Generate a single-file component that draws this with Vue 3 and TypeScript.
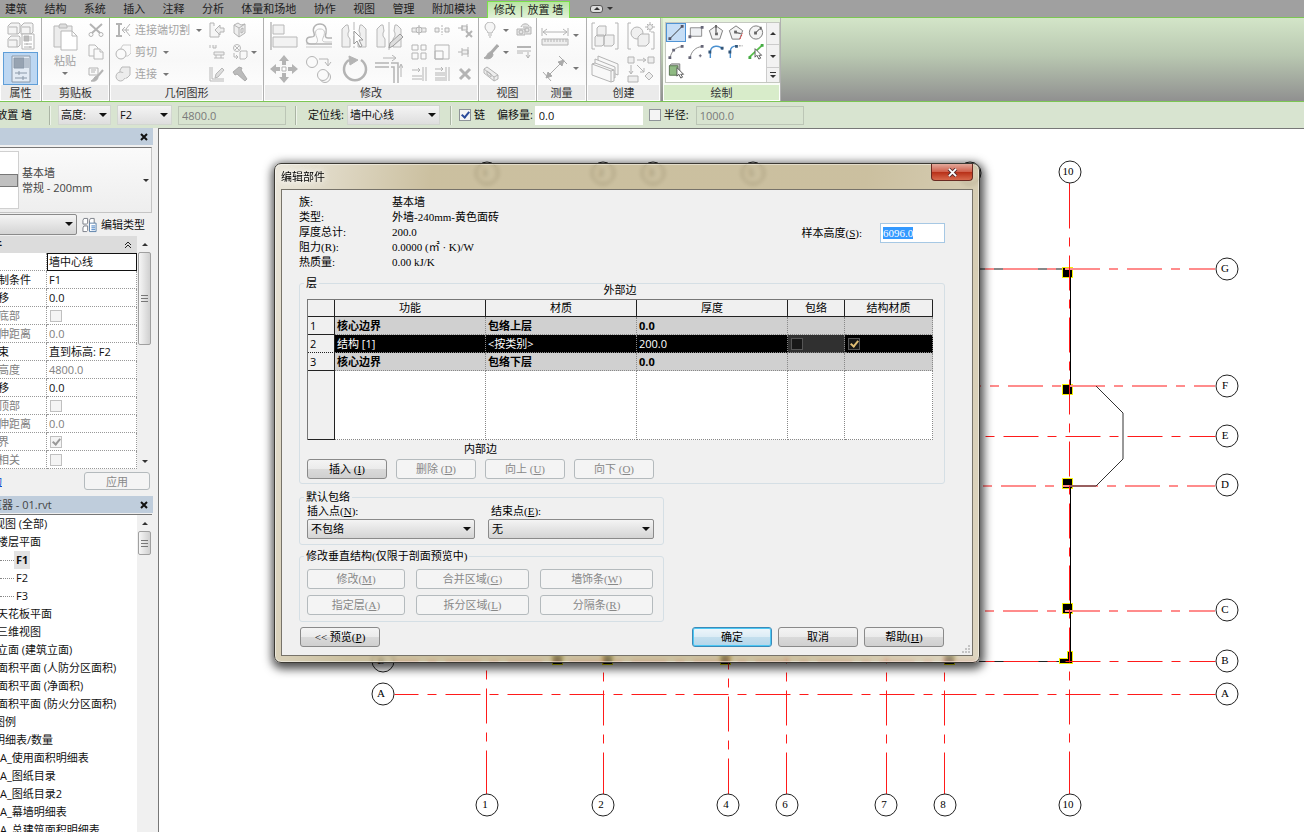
<script setup lang="ts">
import { onMounted, ref } from 'vue'

interface PropertyRow {
  label: string
  kind: 'text' | 'check'
  value?: string
  checked?: boolean
  muted?: boolean
  active?: boolean
}
interface TreeRow {
  text: string
  level: 'root' | 'group' | 'sheet' | 'leaf'
  current?: boolean
}
interface GridLine {
  x1: number
  y1: number
  x2: number
  y2: number
  offset: number
  soft?: boolean
}

const tabs = ['建筑', '结构', '系统', '插入', '注释', '分析', '体量和场地', '协作', '视图', '管理', '附加模块']

const joinTools = [
  { icon: 'cope', text: '连接端切割' },
  { icon: 'cutgeo', text: '剪切' },
  { icon: 'joingeo', text: '连接' },
]
const geoTools = ['wallopen', 'face', 'beamjoin', 'split-face', 'paint', 'hammer']
const modifyLarge = ['align', 'offset', 'mirror-pick', 'mirror-draw', 'move', 'copy-el', 'rotate', 'trim']
const modifySmall = ['split', 'split-gap', 'unpin', 'array', 'scale', 'pin', 'extend', 'extend-many', 'delete']
const drawTools = [
  'line', 'rect', 'poly-in', 'poly-out', 'circle',
  'arc3', 'arc-center', 'arc-tan', 'fillet', 'pick-line', 'pick-face',
]

const properties: PropertyRow[] = [
  { label: '定位线', kind: 'text', value: '墙中心线', active: true },
  { label: '底部限制条件', kind: 'text', value: 'F1' },
  { label: '底部偏移', kind: 'text', value: '0.0' },
  { label: '已附着底部', kind: 'check', muted: true },
  { label: '底部延伸距离', kind: 'text', value: '0.0', muted: true },
  { label: '顶部约束', kind: 'text', value: '直到标高: F2' },
  { label: '无连接高度', kind: 'text', value: '4800.0', muted: true },
  { label: '顶部偏移', kind: 'text', value: '0.0' },
  { label: '已附着顶部', kind: 'check', muted: true },
  { label: '顶部延伸距离', kind: 'text', value: '0.0', muted: true },
  { label: '房间边界', kind: 'check', checked: true, muted: true },
  { label: '与体量相关', kind: 'check', muted: true },
]

const tree: TreeRow[] = [
  { text: '视图 (全部)', level: 'root' },
  { text: '楼层平面', level: 'group' },
  { text: 'F1', level: 'leaf', current: true },
  { text: 'F2', level: 'leaf' },
  { text: 'F3', level: 'leaf' },
  { text: '天花板平面', level: 'group' },
  { text: '三维视图', level: 'group' },
  { text: '立面 (建筑立面)', level: 'group' },
  { text: '面积平面 (人防分区面积)', level: 'group' },
  { text: '面积平面 (净面积)', level: 'group' },
  { text: '面积平面 (防火分区面积)', level: 'group' },
  { text: '图例', level: 'root' },
  { text: '明细表/数量', level: 'root' },
  { text: 'A_使用面积明细表', level: 'sheet' },
  { text: 'A_图纸目录', level: 'sheet' },
  { text: 'A_图纸目录2', level: 'sheet' },
  { text: 'A_幕墙明细表', level: 'sheet' },
  { text: 'A_总建筑面积明细表', level: 'sheet' },
]

const gridLines: GridLine[] = [
  { x1: 979, y1: 269, x2: 1215, y2: 269, offset: 38, soft: true },
  { x1: 979, y1: 386, x2: 1215, y2: 386, offset: 33, soft: true },
  { x1: 979, y1: 436, x2: 1215, y2: 436, offset: 38 },
  { x1: 979, y1: 486, x2: 1215, y2: 486, offset: 40, soft: true },
  { x1: 979, y1: 611, x2: 1215, y2: 611, offset: 38, soft: true },
  { x1: 394, y1: 661, x2: 1215, y2: 661, offset: 11 },
  { x1: 394, y1: 694, x2: 1215, y2: 694, offset: 11 },
  { x1: 1069, y1: 194, x2: 1069, y2: 794, offset: 1 },
  { x1: 486, y1: 670, x2: 486, y2: 794, offset: 44 },
  { x1: 603, y1: 656, x2: 603, y2: 794, offset: 28 },
  { x1: 728, y1: 656, x2: 728, y2: 794, offset: 22 },
  { x1: 786, y1: 656, x2: 786, y2: 794, offset: 28 },
  { x1: 886, y1: 656, x2: 886, y2: 794, offset: 28 },
  { x1: 944, y1: 656, x2: 944, y2: 794, offset: 28 },
]
const lineEnds = [486, 603, 728, 786, 886, 944, 1069]

const bubbles = [
  { x: 487, y: 173, t: '1' }, { x: 603, y: 173, t: '2' }, { x: 653, y: 173, t: '3' },
  { x: 753, y: 173, t: '5' }, { x: 970, y: 173, t: '9' }, { x: 1070, y: 172, t: '10' },
  { x: 1227, y: 269, t: 'G' }, { x: 1227, y: 386, t: 'F' }, { x: 1227, y: 436, t: 'E' },
  { x: 1227, y: 485, t: 'D' }, { x: 1227, y: 610, t: 'C' }, { x: 1227, y: 661, t: 'B' },
  { x: 1227, y: 694, t: 'A' }, { x: 383, y: 661, t: 'B' }, { x: 383, y: 694, t: 'A' },
  { x: 487, y: 805, t: '1' }, { x: 603, y: 805, t: '2' }, { x: 728, y: 805, t: '4' },
  { x: 787, y: 805, t: '6' }, { x: 886, y: 805, t: '7' }, { x: 945, y: 805, t: '8' },
  { x: 1070, y: 805, t: '10' },
]
const columns = [
  { x: 1062, y: 267 }, { x: 1062, y: 384 }, { x: 1062, y: 478 }, { x: 1062, y: 603 },
  { x: 552, y: 654 }, { x: 602, y: 654 }, { x: 720, y: 654 }, { x: 944, y: 654 },
]

const info = [
  ['族:', '基本墙'],
  ['类型:', '外墙-240mm-黄色面砖'],
  ['厚度总计:', '200.0'],
  ['阻力(R):', '0.0000 (㎡ · K)/W'],
  ['热质量:', '0.00 kJ/K'],
]
const layers = [
  { n: 1, fn: '核心边界', mat: '包络上层', th: '0.0', core: true },
  { n: 2, fn: '结构 [1]', mat: '<按类别>', th: '200.0', core: false },
  { n: 3, fn: '核心边界', mat: '包络下层', th: '0.0', core: true },
]
const rowButtons = [
  { t: '插入', k: 'I', off: false }, { t: '删除', k: 'D', off: true },
  { t: '向上', k: 'U', off: true }, { t: '向下', k: 'O', off: true },
]
const verticalButtons = [
  { t: '修改', k: 'M' }, { t: '合并区域', k: 'G' }, { t: '墙饰条', k: 'W' },
  { t: '指定层', k: 'A' }, { t: '拆分区域', k: 'L' }, { t: '分隔条', k: 'R' },
]

const sampleHeight = ref('6096.0')
const sampleInput = ref<HTMLInputElement | null>(null)
onMounted(() => {
  sampleInput.value?.focus()
  sampleInput.value?.select()
})
</script>

<template>
  <div class="app">
    <svg class="sprite" aria-hidden="true">
      <defs>
        <g id="i-types" fill="#f4f4f4" stroke="#b4b4b4">
          <path d="M1 4l3-3h8l1 1v8l-2 2H1zM14 4l3-3h8l1 1v8l-2 2H14zM1 17l3-3h8l1 1v8l-2 2H1z" />
          <path d="M2 5h8v7M15 5h8v7M2 18h8v7" fill="none" />
          <path d="M15 12h12v15H15z" fill="#fff" />
          <path d="M17 14h5v5h-5z" fill="#bbb" /><path d="M24 14v5M17 22h8M17 25h8M20 21v2M23 24v2" />
        </g>
        <g id="i-props" stroke="#8a98a8">
          <path d="M5 1h18v26H5z" fill="#e3ebf4" /><path d="M7 3h10v10H7z" fill="#97a3b1" />
          <path d="M19 3v10M21 3v10M8 18h12M8 23h12M12 16v4M16 21v4" />
        </g>
        <g id="i-paste" fill="#ececec" stroke="#b8b8b8">
          <path d="M3 3h18v21H3z" /><path d="M8 3l1-2h6l1 2v2H8z" fill="#ddd" />
          <path d="M10 8h11l5 5v14H10z" fill="#fff" /><path d="M21 8v5h5" fill="none" />
        </g>
        <g id="i-cut" stroke="#b4b4b4" fill="none"><path d="M2 2l10 9M14 2L4 11" stroke-width="2" /><circle cx="3" cy="12.500" r="2" /><circle cx="13" cy="12.500" r="2" /></g>
        <g id="i-copy" stroke="#b8b8b8" fill="#fafafa"><path d="M1 1h6l3 3v8H1z" /><path d="M6 5h6l3 3v7H6z" /><path d="M12 5v3h3" /></g>
        <g id="i-match" stroke="#b4b4b4" fill="none"><path d="M1 2h9v7H1zM3 4h5M3 6h4" /><path d="M15 4l-6 7" stroke-width="2" /><path d="M9 10c-3 0-3 4-6 5 4 1 7-1 7-4z" fill="#b4b4b4" /></g>
        <g id="i-cope" stroke="#b4b4b4" fill="none"><path d="M1 2h6M1 14h6M4 2v12" stroke-width="2" /><path d="M15 2l-4 5v2l4 5M14 8H7M10 5L7 8l3 3" /></g>
        <g id="i-cutgeo" stroke="#b4b4b4" fill="#fafafa"><path d="M6 4l2-3h8v8l-3 3H6z" fill="none" stroke="#ccc" /><circle cx="6" cy="10" r="5" /></g>
        <g id="i-joingeo" stroke="#b8b8b8" fill="#ececec"><path d="M5 4l2-3h8v8l-3 3H5z" /><circle cx="5.500" cy="10.500" r="4.500" /><path d="M6 7h5v5H7z" stroke="none" /></g>
        <g id="i-wallopen" stroke="#b4b4b4" fill="#eee"><path d="M5 4V1h-4v14h9v-3" fill="#f6f6f6" /><path d="M15 6h-4V3L6 8l5 5v-3h4z" /></g>
        <g id="i-face" stroke="#b4b4b4" fill="#eee"><path d="M2 3l4-2 3 2 4-1v9l-6 4-5-4zM2 3l5 3v9M7 6l6-4M9 7l2-1v4l-2 1z" /></g>
        <g id="i-beamjoin" stroke="#b8b8b8" fill="#eee"><path d="M1 1v3M4 1v3h3V1M5 8h10v3H5zM7 11v3M12 11v3M5 14h10" /></g>
        <g id="i-split-face" stroke="#b8b8b8" fill="none"><circle cx="5" cy="4" r="3.500" /><path d="M3 2l4 4M7 2L3 6M9 7h6v6l-2 2H8V8zM2 9v4h4M4 11l2 2-2 2" /></g>
        <g id="i-paint" stroke="#b8b8b8" fill="#ddd"><path d="M1 1v14h14M3 1v12h12" fill="none" /><path d="M6 12l1-4 6-6 2 2-6 7z" /></g>
        <g id="i-hammer" stroke="#aaa" fill="#bbb"><path d="M1 6l6-5 3 1-1 2 6 9-2 2-8-7-2 1z" /></g>
        <g id="i-align" stroke="#b8b8b8" fill="#f2f2f2"><path d="M1 0v28" stroke="#999" /><path d="M3 3h11v9H3zM3 15h24v10H3z" /></g>
        <g id="i-offset" stroke="#b4b4b4" fill="none"><path d="M1 25h26M1 22h7c5 0 5-4 4-6-3-7-1-9 3-9s6 2 3 9c-1 2-1 4 3 4h6" stroke="#c8c8c8" /><path d="M27 16h-4c-3 0-3-2-2-5 1-5-1-9-6-9s-8 4-6 9c1 3 0 4-3 4-6 0-6 7 0 7h21" stroke-width="1.500" /></g>
        <g id="i-mirror-pick" stroke="#b8b8b8" fill="#f0f0f0"><path d="M2 25V7l4-4h2l1 6-1 2v3l2 3v8zM26 25V7l-4-4h-2l-1 6 1 2v3l-2 3v8z" /><path d="M14 0v28" stroke-dasharray="8 2 2 2" /><path d="M14 9v13l3-3 3 6 2-1-3-6h4z" fill="#fff" stroke="#999" /></g>
        <g id="i-mirror-draw" stroke="#b8b8b8" fill="#f0f0f0"><path d="M2 25V7l4-4h2l1 6-1 2v3l2 3v8zM26 25V7l-4-4h-2l-1 6 1 2v3l-2 3v8z" /><path d="M14 0v28" /><path d="M14 26l1-5 10-9 3 3-10 9z" fill="#ddd" stroke="#999" /></g>
        <g id="i-move" fill="#b4b4b4"><path d="M14 0l5 6h-3v4h-4V6H9zM14 28l5-6h-3v-4h-4v4H9zM0 14l6-5v3h4v4H6v3zM28 14l-6-5v3h-4v4h4v3z" /><path d="M12 12h4v4h-4z" fill="#fff" stroke="#b4b4b4" /></g>
        <g id="i-copy-el" stroke="#b4b4b4" fill="#fafafa"><circle cx="7" cy="7" r="5.500" /><circle cx="20" cy="22" r="5.500" /><circle cx="18" cy="20" r="5.500" /><path d="M14 4h9v6M20 7l3 4 3-4" fill="none" /></g>
        <g id="i-rotate" stroke="#b4b4b4" fill="none"><path d="M9 5a11 11 0 1 0 12 0" stroke-width="2.500" /><path d="M9 1l9 4-8 5z" fill="#b4b4b4" /></g>
        <g id="i-trim" stroke="#b4b4b4" fill="none"><path d="M0 8h14M0 12h14M16 8h7v20M16 12h3v16" stroke-width="1.500" /><path d="M8 3h12M17 0l4 3-4 3M26 22V10M24 13l2-4 2 4" /></g>
        <g id="i-split" stroke="#b4b4b4" fill="#eee"><path d="M1 6h14v4H1z" /><circle cx="8" cy="8" r="3" /><path d="M8 3v10" /></g>
        <g id="i-split-gap" stroke="#b4b4b4" fill="#eee"><path d="M1 6h4v4H1zM11 6h4v4h-4z" /><path d="M8 3v10" stroke-dasharray="2 1" /></g>
        <g id="i-unpin" stroke="#b4b4b4" fill="#eee"><path d="M1 6h4M5 3v6M5 4h5v4H5zM10 2v8" /><path d="M9 9l6 6M15 9l-6 6" stroke-width="2" /></g>
        <g id="i-array" stroke="#b4b4b4" fill="#fafafa"><path d="M1 1h6v5H1zM10 1h5v5h-5zM1 9h6v6H1zM10 9h5v6h-5z" /></g>
        <g id="i-scale" stroke="#b4b4b4" fill="#fafafa"><path d="M1 1h14v14H1zM1 7h8v8H1z" /></g>
        <g id="i-pin" stroke="#b4b4b4" fill="#eee"><path d="M1 8h4M5 4v8M5 6h6v4H5M11 3v10" /></g>
        <g id="i-extend" stroke="#b4b4b4" fill="none"><path d="M1 4h8M7 2l2 2-2 2M12 1v14M15 1v14M1 10h10M1 13h10" /></g>
        <g id="i-extend-many" stroke="#b4b4b4" fill="none"><path d="M1 3h8M7 1l2 2-2 2M12 1v14M15 1v14M1 7h10M1 9h10M1 12h10M1 14h10" /></g>
        <g id="i-delete" stroke="#b4b4b4"><path d="M3 3l10 10M13 3L3 13" stroke-width="3" /></g>
        <g id="i-bulb" stroke="#b4b4b4" fill="#f6f6f6"><path d="M5 11c0-2-3-3-3-6a4.500 4.500 0 0 1 10 0c0 3-3 4-3 6zM5 13h4M6 15h2" /></g>
        <g id="i-override" stroke="#b4b4b4" fill="#e6e6e6"><path d="M1 7h8v6H1zM7 5h8v7h-5M5 5c1-4 7-4 8-1" /><circle cx="5" cy="10" r="2" /><circle cx="11" cy="8" r="2" /></g>
        <g id="i-brush" stroke="#aaa"><path d="M15 1L8 9" stroke-width="3" /><path d="M8 8c-4 0-3 4-7 6 5 2 9 0 9-4z" fill="#aaa" /></g>
        <g id="i-lines" stroke="#b4b4b4" fill="none"><path d="M1 3h14" stroke-width="2" /><path d="M1 7h14M1 9h6M12 8v6M10 11l2 3 2-3" /></g>
        <g id="i-box" stroke="#b4b4b4" fill="#eee"><path d="M1 3l3-2 11 8v4l-4 2L1 7zM1 3l10 8v4M11 11l4-2M4 5l4 3v3L4 8z" /></g>
        <g id="i-measure" stroke="#b4b4b4" fill="#eee"><path d="M2 10h24M6 7l-4 3 4 3M22 7l4 3-4 3M1 6v8M27 6v8" fill="none" /><path d="M1 17h26v6H1z" /><path d="M4 17v3M7 17v3M10 17v3M13 17v3M16 17v3M19 17v3M22 17v3M25 17v3" /></g>
        <g id="i-dimension" stroke="#aaa" fill="#aaa"><path d="M6 22L22 6M2 17l8 9M18 1l8 8" /><path d="M5 23l2-6 4 4zM23 5l-2 6-4-4z" /></g>
        <g id="i-assembly" stroke="#b4b4b4" fill="#f0f0f0"><path d="M4 1H1v26h3M24 1h3v26h-3" fill="none" /><path d="M6 6l2-2h7v8l-2 2H6zM4 15l2-2h7v9l-2 2H4zM13 15l2-2h8v9l-2 2h-8z" /></g>
        <g id="i-group" stroke="#b4b4b4" fill="#f0f0f0"><path d="M4 1H1v26h3M24 10h3v17h-3" fill="none" /><circle cx="10" cy="11" r="6" /><path d="M11 15l3-3h8v9l-3 3h-8z" /><circle cx="23" cy="5" r="2.500" /><path d="M23 0v2M23 8v2M18 5h2M26 5h2M20 2l1 1M26 2l-1 1M20 8l1-1" /></g>
        <g id="i-parts" stroke="#b4b4b4" fill="#f8f8f8"><path d="M7 1l20 8v11L7 12z" /><path d="M4 4l20 8v11L4 15z" /><path d="M1 9l3-1 19 7v11l-3 1L1 20z" /><path d="M1 9l19 7 3-1M20 16v11" fill="none" /></g>
        <g id="i-similar" stroke="#b4b4b4" fill="#eee"><path d="M1 2h6v6H1zM21 2h6v6h-6zM1 21h10v6H1zM22 17l4 4-4 4-4-4z" /><path d="M10 5h8M16 3l3 2-3 2M4 10v8M2 16l2 3 2-3M10 10l7 7M17 13v4h-4" fill="none" /></g>
        <g id="i-line"><path d="M3 15L15 3" stroke="#333" /><path d="M1 14h3v3H1zM14 1h3v3h-3z" fill="#556" /></g>
        <g id="i-rect"><path d="M3 4h12v9H3z" fill="#eef0f3" stroke="#888" /><path d="M1 12h3v3H1zM14 2h3v3h-3z" fill="#667" /></g>
        <g id="i-poly-in"><path d="M9 2l7 5-3 9H5L2 7z" fill="#f4f4f4" stroke="#777" /><path d="M9 3v6" stroke="#333" /><path d="M8 9h3v3H8zM8 1h2v3H8z" fill="#666" /></g>
        <g id="i-poly-out"><path d="M9 2l7 5-3 9H5L2 7z" fill="#f4f4f4" stroke="#777" /><path d="M8 9l6 1" stroke="#333" /><path d="M7 7h3v3H7z" fill="#666" /><path d="M13 16l3-6" stroke="#e33" stroke-dasharray="2 1" /></g>
        <g id="i-circle"><circle cx="9" cy="9" r="7" fill="#f4f4f4" stroke="#777" /><path d="M9 9l4-4" stroke="#333" /><path d="M7 8h3v3H7zM13 3h2v3h-2z" fill="#666" /></g>
        <g id="i-arc3"><path d="M3 15C4 9 9 4 15 4" fill="none" stroke="#888" /><path d="M1 14h3v3H1zM14 2h3v3h-3zM5 6h3v3H5z" fill="#667" /></g>
        <g id="i-arc-center"><path d="M3 15C4 9 9 4 15 4" fill="none" stroke="#888" /><path d="M1 14h3v3H1zM14 2h3v3h-3zM12 13h3v1h-3zM13 12h1v3h-1z" fill="#667" /></g>
        <g id="i-arc-tan"><path d="M3 16V9c1-7 10-7 13-2" fill="none" stroke="#4a90d0" stroke-width="1.500" /><path d="M1 8h3v3H1zM14 4h3v3h-3z" fill="#357" /></g>
        <g id="i-fillet"><path d="M3 16V9c0-4 3-6 7-6" fill="none" stroke="#4a90d0" stroke-width="1.500" /><path d="M1 8h3v3H1zM8 2h3v3H8z" fill="#357" /><path d="M12 3h4" stroke="#888" stroke-dasharray="2 1" /></g>
        <g id="i-pick-line"><path d="M2 15L16 2" stroke="#59c04c" stroke-width="2" /><path d="M1 14h3v3H1zM14 1h3v3h-3z" fill="#4a4" /><path d="M8 6v9l2-2 2 4 2-1-2-3h3z" fill="#fff" stroke="#555" /></g>
        <g id="i-pick-face"><path d="M2 4l2-2h9v10l-2 2" fill="#ccc" stroke="#777" /><path d="M2 4h9v10H2z" fill="#8fba83" stroke="#55734e" /><path d="M10 6v9l2-2 2 4 2-1-2-3h3z" fill="#fff" stroke="#555" /></g>
        <g id="i-edit-type" fill="#fff" stroke="#777c85"><path d="M1 3l1-2h4v5l-1 1H1zM8 3l1-2h4v5l-1 1H8zM1 11l1-2h4v5l-1 1H1z" /><path d="M8 6h7v9H8z" stroke="#5a7fa8" /><path d="M10 9h4M10 11h4M10 13h4" stroke="#3b78c0" /></g>
      </defs>
    </svg>

    <nav class="tabs" aria-label="功能区选项卡">
      <div class="tab-list">
        <button v-for="t in tabs" :key="t" type="button" class="tab">{{ t }}</button>
      </div>
      <button type="button" class="tab current">修改 | 放置 墙</button>
      <button type="button" class="ribbon-toggle" aria-label="最小化功能区">
        <span class="pill"><i class="tri up"></i></span><i class="tri"></i>
      </button>
    </nav>

    <header class="ribbon">
      <section class="panel p-props">
        <div class="tools stack">
          <button type="button" class="big" aria-label="类型属性"><svg viewBox="0 0 28 28"><use href="#i-types" /></svg></button>
          <button type="button" class="big pressed" aria-label="属性"><svg viewBox="0 0 28 28"><use href="#i-props" /></svg></button>
        </div>
        <h2>属性</h2>
      </section>
      <section class="panel p-clip">
        <div class="tools">
          <button type="button" class="paste">
            <svg viewBox="0 0 28 28"><use href="#i-paste" /></svg><span>粘贴</span><i class="tri dim"></i>
          </button>
          <div class="small-col">
            <button v-for="i in ['cut', 'copy', 'match']" :key="i" type="button" class="small" :aria-label="i"><svg viewBox="0 0 16 16"><use :href="'#i-' + i" /></svg></button>
          </div>
        </div>
        <h2>剪贴板</h2>
      </section>
      <section class="panel p-geo">
        <div class="tools">
          <div class="join-col">
            <button v-for="j in joinTools" :key="j.icon" type="button" class="wide">
              <svg viewBox="0 0 16 16"><use :href="'#i-' + j.icon" /></svg><span>{{ j.text }}</span><i class="tri dim"></i>
            </button>
          </div>
          <div class="small-grid two">
            <button v-for="i in geoTools" :key="i" type="button" class="small" :aria-label="i"><svg viewBox="0 0 16 16"><use :href="'#i-' + i" /></svg></button>
          </div>
          <i class="tri dim middle"></i>
        </div>
        <h2>几何图形</h2>
      </section>
      <section class="panel p-modify">
        <div class="tools">
          <div class="big-grid four">
            <button v-for="i in modifyLarge" :key="i" type="button" class="big" :aria-label="i"><svg viewBox="0 0 28 28"><use :href="'#i-' + i" /></svg></button>
          </div>
          <div class="small-grid three">
            <button v-for="i in modifySmall" :key="i" type="button" class="small" :aria-label="i"><svg viewBox="0 0 16 16"><use :href="'#i-' + i" /></svg></button>
          </div>
        </div>
        <h2>修改</h2>
      </section>
      <section class="panel p-view">
        <div class="tools">
          <div class="view-grid">
            <button type="button" class="small" aria-label="隐藏"><svg viewBox="0 0 16 16"><use href="#i-bulb" /></svg></button>
            <i class="tri dim"></i>
            <button type="button" class="small" aria-label="置换"><svg viewBox="0 0 16 16"><use href="#i-override" /></svg></button>
            <button type="button" class="small" aria-label="替换"><svg viewBox="0 0 16 16"><use href="#i-brush" /></svg></button>
            <i class="tri dim"></i>
            <button type="button" class="small" aria-label="线处理"><svg viewBox="0 0 16 16"><use href="#i-lines" /></svg></button>
            <button type="button" class="small" aria-label="选择框"><svg viewBox="0 0 16 16"><use href="#i-box" /></svg></button>
          </div>
        </div>
        <h2>视图</h2>
      </section>
      <section class="panel p-measure">
        <div class="tools measure-grid">
          <button type="button" class="big" aria-label="测量"><svg viewBox="0 0 28 28"><use href="#i-measure" /></svg></button>
          <i class="tri dim"></i>
          <button type="button" class="big" aria-label="标注"><svg viewBox="0 0 28 28"><use href="#i-dimension" /></svg></button>
          <i class="tri dim"></i>
        </div>
        <h2>测量</h2>
      </section>
      <section class="panel p-create">
        <div class="tools">
          <div class="big-grid pair">
            <button v-for="i in ['assembly', 'group', 'parts', 'similar']" :key="i" type="button" class="big" :aria-label="i"><svg viewBox="0 0 28 28"><use :href="'#i-' + i" /></svg></button>
          </div>
        </div>
        <h2>创建</h2>
      </section>
      <section class="panel p-draw">
        <div class="tools">
          <div class="gallery">
            <div class="gallery-grid">
              <button v-for="(i, n) in drawTools" :key="i" type="button" class="draw" :class="{ chosen: n === 0 }" :aria-label="i"><svg viewBox="0 0 18 18"><use :href="'#i-' + i" /></svg></button>
            </div>
            <div class="gallery-scroll">
              <button type="button" aria-label="向上滚动"><i class="tri up"></i></button>
              <button type="button" aria-label="向下滚动"><i class="tri"></i></button>
              <button type="button" class="more" aria-label="更多"><i class="tri"></i></button>
            </div>
          </div>
        </div>
        <h2>绘制</h2>
      </section>
    </header>

    <form class="options" @submit.prevent>
      <span class="mode"><span>修改 | 放置 墙</span></span>
      <i class="bar"></i>
      <span class="pick o-height"><select aria-label="高度方式"><option>高度:</option></select></span>
      <span class="pick o-level"><select aria-label="标高"><option>F2</option></select></span>
      <input class="field" type="text" value="4800.0" disabled aria-label="高度值">
      <i class="bar"></i>
      <label for="loc">定位线:</label>
      <span class="pick o-loc"><select id="loc"><option>墙中心线</option></select></span>
      <i class="bar"></i>
      <label class="tick"><input type="checkbox" checked>链</label>
      <label class="o-offset" for="off">偏移量:</label>
      <input id="off" class="field live" type="text" value="0.0">
      <label class="tick"><input type="checkbox">半径:</label>
      <input class="field" type="text" value="1000.0" disabled aria-label="半径值">
    </form>

    <div class="workspace">
      <aside class="dock">
        <section class="palette">
          <div class="dock-title"><span>属性</span><button type="button" aria-label="关闭属性"><svg viewBox="0 0 8 8"><path d="M1 1l6 6M7 1L1 7" stroke="#111" stroke-width="2" /></svg></button></div>
          <button type="button" class="type-selector">
            <span class="thumb"><i></i></span>
            <span class="type-name">基本墙<br>常规 - 200mm</span>
            <i class="tri"></i>
          </button>
          <div class="instance">
            <span class="pick framed"><select aria-label="实例"><option>新建 墙</option></select></span>
            <button type="button" class="edit-type"><svg viewBox="0 0 16 16"><use href="#i-edit-type" /></svg>编辑类型</button>
          </div>
          <div class="scroll-area">
            <div class="prop-main">
              <div class="prop-head"><span>限制条件</span>
                <svg viewBox="0 0 8 8"><path d="M1 4l3-3 3 3M1 7l3-3 3 3" fill="none" stroke="#222" /></svg>
              </div>
              <table class="props">
                <tbody>
                  <tr v-for="p in properties" :key="p.label" :class="{ muted: p.muted }">
                    <th scope="row">{{ p.label }}</th>
                    <td :class="{ active: p.active }">
                      <input v-if="p.kind === 'check'" type="checkbox" :checked="p.checked" disabled :aria-label="p.label">
                      <template v-else>{{ p.value }}</template>
                    </td>
                  </tr>
                </tbody>
              </table>
            </div>
            <div class="scrollbar"><i class="tri up"></i><span class="thumb-bar tall"></span><i class="tri last"></i></div>
          </div>
          <div class="apply-row"><a href="#help">属性帮助</a><button type="button" class="btn" disabled>应用</button></div>
        </section>
        <section class="palette browser">
          <div class="dock-title"><span>项目浏览器 - 01.rvt</span><button type="button" aria-label="关闭浏览器"><svg viewBox="0 0 8 8"><path d="M1 1l6 6M7 1L1 7" stroke="#111" stroke-width="2" /></svg></button></div>
          <div class="scroll-area">
            <ul class="tree">
              <li v-for="t in tree" :key="t.text" :class="[t.level, { current: t.current }]"><span>{{ t.text }}</span></li>
            </ul>
            <div class="scrollbar"><i class="tri up"></i><span class="thumb-bar"></span></div>
          </div>
        </section>
      </aside>

      <main class="canvas">
        <svg class="drawing" viewBox="159 129 1145 703" role="img" aria-label="楼层平面 F1">
          <g shape-rendering="crispEdges">
            <path d="M979 269h83" stroke="#888" stroke-width="2" />
            <path d="M979 661.500h83" stroke="#222" />
            <rect v-for="c in columns" :key="c.x + '-' + c.y" :x="c.x" :y="c.y" width="10" height="10" fill="#000" stroke="#f4f000" />
            <path d="M1067 651h5v12h-13v-5h8z" fill="#000" stroke="#f4f000" />
          </g>
          <path d="M1070.500 272v114M1070.500 487v172" stroke="#000" />
          <template v-for="(l, n) in gridLines" :key="n">
            <line v-if="l.soft" :x1="l.x1" :y1="l.y1" :x2="l.x2" :y2="l.y2" :stroke-dashoffset="l.offset" stroke="#ff8c8c" stroke-width="2" stroke-dasharray="35 9 9 9" />
            <line v-else :x1="l.x1 + 0.5" :y1="l.y1 + 0.5" :x2="l.x2 + 0.5" :y2="l.y2 + 0.5" :stroke-dashoffset="l.offset" stroke="#ff1a1a" stroke-dasharray="35 9 9 9" />
          </template>
          <path d="M1069.500 183v12" stroke="#ff1a1a" />
          <line v-for="x in lineEnds" :key="x" :x1="x + 0.5" :x2="x + 0.5" y1="776" y2="794" stroke="#ff1a1a" />
          <path d="M1096 386l27 27v46l-27 27h-26" fill="none" stroke="#333" />
          <g v-for="b in bubbles" :key="b.t + b.x + '-' + b.y">
            <circle :cx="b.x" :cy="b.y" r="11" fill="#fff" stroke="#222" />
            <text :x="b.x - 2" :y="b.y + 3" text-anchor="middle">{{ b.t }}</text>
          </g>
        </svg>

        <div class="dialog" role="dialog" aria-labelledby="dlg-title">
          <div class="dlg-bar">
            <h1 id="dlg-title">编辑部件</h1>
            <button type="button" class="dlg-close" aria-label="关闭"><svg viewBox="0 0 12 10"><path d="M2 1l8 8M10 1L2 9" stroke="#5a3030" stroke-width="4" /><path d="M2 1l8 8M10 1L2 9" stroke="#fff" stroke-width="2" /></svg></button>
          </div>
          <div class="dlg-body">
            <div class="summary">
              <dl>
                <template v-for="r in info" :key="r[0]"><dt>{{ r[0] }}</dt><dd>{{ r[1] }}</dd></template>
              </dl>
              <div class="sample">
                <label for="sample">样本高度(<u>S</u>):</label>
                <input id="sample" ref="sampleInput" v-model="sampleHeight" type="text">
              </div>
            </div>

            <fieldset class="layers">
              <legend>层</legend>
              <p class="side outer">外部边</p>
              <table class="grid">
                <colgroup><col class="c-n"><col class="c-m"><col class="c-m"><col class="c-m"><col class="c-w"><col class="c-s"></colgroup>
                <thead><tr><th></th><th>功能</th><th>材质</th><th>厚度</th><th>包络</th><th>结构材质</th></tr></thead>
                <tbody>
                  <tr v-for="l in layers" :key="l.n" :class="l.core ? 'core' : 'picked'">
                    <th scope="row">{{ l.n }}</th><td>{{ l.fn }}</td><td>{{ l.mat }}</td><td>{{ l.th }}</td>
                    <td class="wrap"><input v-if="!l.core" type="checkbox" disabled aria-label="包络"></td>
                    <td><input v-if="!l.core" type="checkbox" checked aria-label="结构材质"></td>
                  </tr>
                  <tr class="rest"><th></th><td></td><td></td><td></td><td></td><td></td></tr>
                </tbody>
              </table>
              <div class="inner">
                <p class="side">内部边</p>
                <div class="row-buttons">
                  <button v-for="b in rowButtons" :key="b.k" type="button" class="btn" :disabled="b.off">{{ b.t }} (<u>{{ b.k }}</u>)</button>
                </div>
              </div>
            </fieldset>

            <fieldset class="wraps">
              <legend>默认包络</legend>
              <div class="wrap-grid">
                <label for="ins">插入点(<u>N</u>):</label>
                <label class="end" for="end">结束点(<u>E</u>):</label>
                <span class="pick framed"><select id="ins"><option>不包络</option></select></span>
                <span class="pick framed"><select id="end"><option>无</option></select></span>
              </div>
            </fieldset>

            <fieldset class="vertical">
              <legend>修改垂直结构(仅限于剖面预览中)</legend>
              <div class="vert-grid">
                <button v-for="b in verticalButtons" :key="b.k" type="button" class="btn" disabled>{{ b.t }}(<u>{{ b.k }}</u>)</button>
              </div>
            </fieldset>

            <div class="footer">
              <button type="button" class="btn">&lt;&lt; 预览(<u>P</u>)</button>
              <div class="answers">
                <button type="button" class="btn default">确定</button>
                <button type="button" class="btn">取消</button>
                <button type="button" class="btn">帮助(<u>H</u>)</button>
              </div>
            </div>
            <svg class="grip" viewBox="0 0 10 10"><path d="M7 1h2v2H7zM4 4h2v2H4zM7 4h2v2H7zM1 7h2v2H1zM4 7h2v2H4zM7 7h2v2H7z" fill="#c4c4c4" /></svg>
          </div>
        </div>
      </main>
    </div>
  </div>
</template>

<style>
body {
  margin: 0;
}
</style>

<style scoped>
.app, .app * {
  box-sizing: border-box;
}
.app {
  display: flex;
  flex-direction: column;
  height: 100vh;
  overflow: hidden;
  font: 11px/16px "Open Sans", "Noto Sans CJK SC", sans-serif;
  color: #111;
  background: #f0f0f0;
}
button, input, select {
  font: inherit;
  color: inherit;
  margin: 0;
}
button {
  padding: 0;
  border: 0;
  background: none;
}
h1, h2, p, dl, dd, ul {
  margin: 0;
  padding: 0;
  font-size: 11px;
  font-weight: 400;
}
svg {
  display: block;
}
.sprite {
  position: absolute;
  width: 0;
  height: 0;
}
.tri {
  flex: none;
  width: 0;
  height: 0;
  border: 3px solid transparent;
  border-top-color: #333;
  border-bottom-width: 0;
}
.tri.up {
  border-width: 0 3px 3px;
  border-bottom-color: #333;
}
.tri.dim {
  border-top-color: #777;
}

/* tabs */
.tabs {
  display: flex;
  flex: none;
  height: 18px;
  background: #a0a0a0;
  border-bottom: 1px solid #7cc653;
}
.tab-list {
  display: flex;
  justify-content: space-between;
  width: 482px;
  padding: 0 6px 0 5px;
}
.tab {
  color: #222;
  line-height: 18px;
}
.tab.current {
  width: 83px;
  margin: 1px 0 -1px 5px;
  border: 1px solid #7be04a;
  border-bottom: 0;
  background: linear-gradient(#b9e3a4, #e2f2d8);
  line-height: 14px;
}
.ribbon-toggle {
  display: flex;
  align-items: center;
  gap: 4px;
  margin-left: 20px;
}
.pill {
  display: grid;
  place-items: center;
  width: 13px;
  height: 8px;
  border: 1px solid #555;
  border-radius: 3px;
  background: #ddd;
}

/* ribbon */
.ribbon {
  display: flex;
  flex: none;
  height: 84px;
  border-bottom: 1px solid #7cc653;
  background: linear-gradient(#d3e5c8, #b9c8b1 45%, #909090);
}
.panel {
  display: flex;
  flex-direction: column;
  flex: none;
  border-right: 1px solid #b0b0b0;
  background: linear-gradient(#fff, #f8f8f8 50%, #fff);
}
.panel h2 {
  margin: 0 1px 1px;
  height: 15px;
  line-height: 15px;
  text-align: center;
  color: #333;
  background: #ebebeb;
}
.tools {
  display: flex;
  height: 67px;
  padding-top: 1px;
}
.p-props { width: 42px; }
.p-clip { width: 68px; }
.p-geo { width: 154px; }
.p-modify { width: 215px; }
.p-view { width: 58px; }
.p-measure { width: 50px; }
.p-create { width: 74px; }
.p-draw {
  width: 118px;
  margin-left: 2px;
  background: linear-gradient(#e4f1da, #fff);
}
.p-draw h2 {
  background: #d8ecca;
}
.big {
  display: grid;
  place-items: center;
}
.big svg {
  width: 28px;
  height: 28px;
}
.stack {
  flex-direction: column;
  padding-left: 3px;
}
.stack .big {
  width: 35px;
  height: 33px;
}
.pressed {
  border: 1px solid #5f9ed8;
  background: #bdd7f2;
}
.paste {
  display: flex;
  flex-direction: column;
  align-items: center;
  width: 46px;
  padding-top: 3px;
  color: #a0a0a0;
}
.paste svg {
  width: 28px;
  height: 30px;
}
.paste span {
  margin: 1px 0 3px;
}
.small {
  display: grid;
  place-items: center;
  height: 22px;
}
.small svg {
  width: 16px;
  height: 16px;
}
.join-col {
  width: 95px;
  padding-left: 5px;
}
.wide {
  display: flex;
  align-items: center;
  gap: 4px;
  height: 22px;
  color: #a4a4a4;
}
.wide svg {
  width: 16px;
  height: 16px;
}
.wide .tri {
  margin-left: 2px;
}
.small-grid, .big-grid, .view-grid {
  display: grid;
  align-content: start;
}
.two { grid-template-columns: 23px 23px; }
.three {
  grid-template-columns: repeat(3, 23px);
  padding-left: 1px;
}
.middle {
  align-self: center;
}
.four {
  grid-template: 33px 33px / repeat(4, 35px);
  padding-left: 2px;
}
.pair { grid-template: 33px 33px / 36px 35px; }
.view-grid {
  grid-template-columns: 20px 10px 26px;
  align-items: center;
  justify-items: center;
  padding-left: 2px;
}
.measure-grid {
  display: grid;
  grid-template: 33px 33px / 36px 10px;
  align-items: center;
}
.gallery {
  display: flex;
  flex: 1;
  margin: 3px 1px 2px 2px;
  border: 1px solid #c4c8c0;
  background: #fff;
}
.gallery-grid {
  display: grid;
  flex: 1;
  grid-template-columns: repeat(5, 20px);
  grid-auto-rows: 19px;
}
.draw {
  display: grid;
  place-items: center;
  border: 1px solid transparent;
}
.draw svg {
  width: 18px;
  height: 17px;
}
.draw.chosen {
  border-color: #4f93d4;
  background: #c6def6;
}
.gallery-scroll {
  display: flex;
  flex-direction: column;
  width: 13px;
  border-left: 1px solid #ccc;
}
.gallery-scroll button {
  display: grid;
  flex: 3;
  place-items: center;
  border-bottom: 1px solid #ccc;
  background: #f2f2f2;
}
.gallery-scroll .more {
  flex: 2;
  align-content: center;
  gap: 2px;
  border-bottom: 0;
}
.more::before {
  content: "";
  width: 6px;
  border-top: 1px solid #333;
}

/* options bar */
.options {
  display: flex;
  flex: none;
  align-items: center;
  height: 26px;
  background: #d8e4d0;
}
.mode {
  display: flex;
  justify-content: flex-end;
  width: 32px;
  overflow: hidden;
  white-space: nowrap;
}
.bar {
  width: 2px;
  height: 19px;
  margin: 0 7px 0 17px;
  border-left: 1px solid #aab4a4;
  border-right: 1px solid #eef4ea;
}
.bar + label {
  padding: 0 3px 0 4px;
}
.pick {
  position: relative;
  display: block;
}
.pick select {
  display: block;
  width: 100%;
  height: 20px;
  padding: 0 14px 0 3px;
  border: 1px solid #d2d6d0;
  border-radius: 0;
  appearance: none;
  background: linear-gradient(#f4f4f4, #dedede);
}
.pick::after {
  content: "";
  position: absolute;
  right: 4px;
  top: 8px;
  border: 4px solid transparent;
  border-top: 4px solid #111;
  border-bottom: 0;
  pointer-events: none;
}
.pick.framed select {
  border-color: #8a8a8a;
  border-radius: 2px;
  background: linear-gradient(#f4f4f4, #d4d4d4);
}
.options .pick select {
  padding-left: 2px;
}
.o-height { width: 53px; margin-right: 6px; }
.o-level { width: 55px; margin-right: 6px; }
.o-loc { width: 93px; }
.o-loc + .bar { margin-left: 10px; }
.options .field + .bar { margin-left: 9px; }
.field {
  width: 108px;
  height: 19px;
  padding: 0 3px;
  border: 1px solid #bcc6b6;
  background: transparent;
}
.field:disabled {
  color: #7a7a7a;
}
.field.live {
  border-color: #fff;
  background: #fff;
}
input[type="checkbox"] {
  display: block;
  position: relative;
  flex: none;
  width: 12px;
  height: 12px;
  border: 1px solid #8f9499;
  appearance: none;
  background: #f4f4f4;
}
input[type="checkbox"]:checked::after {
  content: "";
  position: absolute;
  left: 3px;
  top: 0;
  width: 3px;
  height: 6px;
  border: solid #2a4a9a;
  border-width: 0 2px 2px 0;
  transform: rotate(40deg);
}
.tick {
  display: flex;
  align-items: center;
  gap: 3px;
}
.options .bar + .tick { padding: 0; }
.o-offset { padding: 0 2px 0 12px; }
.live + .tick { padding: 0 7px 0 6px; }

/* docked palettes */
.workspace {
  display: flex;
  flex: 1;
  min-height: 0;
  background: #f0f0f0;
}
.dock {
  display: flex;
  flex: none;
  flex-direction: column;
  width: 203px;
  margin-left: -45px;
}
.palette {
  width: 198px;
}
.browser {
  display: flex;
  flex: 1;
  flex-direction: column;
  min-height: 0;
  margin-top: 6px;
}
.dock-title {
  display: flex;
  align-items: center;
  justify-content: space-between;
  height: 17px;
  padding: 0 5px 0 3px;
  color: #444;
  background: #bfcddc;
}
.dock-title svg {
  width: 8px;
  height: 8px;
}
.type-selector {
  display: flex;
  align-items: center;
  width: 197px;
  height: 66px;
  margin-top: 2px;
  border: 1px solid #c4c4c4;
  border-top-color: #777;
  text-align: left;
  color: #444;
  background: linear-gradient(#fafafa, #eee);
}
.thumb {
  display: grid;
  align-items: center;
  width: 63px;
  height: 58px;
  border: 1px solid #d0d0d0;
  background: #fff;
}
.thumb i {
  height: 13px;
  border: 1px solid #777;
  background: #c0c0c0;
}
.type-name {
  flex: 1;
  padding-left: 3px;
  line-height: 15px;
}
.type-selector .tri {
  margin-right: 2px;
}
.instance {
  display: flex;
  align-items: center;
  height: 23px;
  padding: 0 4px 0 3px;
}
.instance .pick {
  width: 119px;
}
.instance select {
  height: 21px;
}
.edit-type {
  display: flex;
  align-items: center;
  gap: 4px;
  margin-left: 5px;
}
.edit-type svg {
  width: 15px;
  height: 16px;
}
.scroll-area {
  display: flex;
  width: 197px;
}
.prop-main {
  flex: 1;
  background: #fff;
}
.prop-head {
  display: flex;
  align-items: center;
  justify-content: space-between;
  height: 17px;
  padding: 0 5px 0 3px;
  font-weight: 700;
  background: #dcdcdc;
}
.prop-head svg {
  width: 8px;
  height: 8px;
}
.props {
  width: 182px;
  border-spacing: 0;
  table-layout: fixed;
}
.props th, .props td {
  height: 18px;
  padding: 0 0 0 2px;
  border: 0 dotted #999;
  border-width: 0 1px 1px 0;
  text-align: left;
  font-weight: 400;
  line-height: 16px;
  white-space: nowrap;
}
.props th {
  width: 92px;
  padding-left: 10px;
}
.props .muted {
  color: #808080;
}
.props td.active {
  border: 1px solid #111;
  padding-left: 1px;
}
.props input {
  margin-left: 1px;
  border-color: #c0c0c0;
}
.props input:checked::after {
  border-color: #999;
}
.scrollbar {
  display: flex;
  flex: none;
  flex-direction: column;
  align-items: center;
  width: 15px;
  padding: 7px 0 6px;
  background: #f0f0f0;
}
.thumb-bar {
  display: grid;
  place-items: center;
  width: 13px;
  height: 24px;
  margin-top: 6px;
  border: 1px solid #a0a0a0;
  border-radius: 2px;
  background: linear-gradient(90deg, #f6f6f6, #d0d0d0);
}
.thumb-bar::after {
  content: "";
  width: 7px;
  height: 7px;
  background: repeating-linear-gradient(#777 0 1px, transparent 1px 3px);
}
.thumb-bar.tall {
  height: 93px;
}
.last {
  margin-top: auto;
}
.apply-row {
  display: flex;
  align-items: center;
  justify-content: space-between;
  height: 21px;
  padding: 2px 3px 0;
  width: 198px;
}
.apply-row a {
  color: #0a50d0;
}
.apply-row .btn {
  width: 66px;
  height: 18px;
}
.browser .scroll-area {
  flex: 1;
  min-height: 0;
  margin-top: 1px;
  border-top: 1px solid #777;
}
.tree {
  flex: 1;
  overflow: hidden;
  list-style: none;
  background: #fff;
}
.tree li {
  display: flex;
  height: 18px;
  line-height: 18px;
  white-space: nowrap;
}
.tree .root { padding-left: 39px; }
.tree .group { padding-left: 42px; }
.tree .sheet { padding-left: 45px; }
.tree .leaf {
  align-items: center;
  padding-left: 45px;
}
.tree .leaf::before {
  content: "";
  width: 14px;
  border-top: 1px dotted #888;
}
.tree .leaf span {
  padding: 0 2px;
}
.tree .current span {
  font-weight: 700;
  background: #e2e2e2;
}

/* drawing canvas */
.canvas {
  position: relative;
  flex: 1;
  min-width: 0;
  border: 1px solid #777;
  border-width: 1px 0 0 1px;
  background: #fff;
}
.drawing {
  width: 100%;
  height: 100%;
}
.drawing text {
  font: 11px "Liberation Serif", serif;
}

/* dialog */
.dialog {
  position: absolute;
  left: 115px;
  top: 34px;
  width: 706px;
  padding: 0 6px 6px;
  border: 1px solid #3c3a34;
  border-radius: 7px;
  background: linear-gradient(100deg, rgba(226, 220, 204, .7), rgba(181, 165, 119, .7) 20%, rgba(181, 165, 119, .7) 75%, rgba(208, 196, 166, .7));
  box-shadow: inset 0 0 0 1px rgba(255, 255, 255, .45), 1px 3px 10px 3px rgba(0, 0, 0, .7);
  backdrop-filter: blur(2px);
  font-family: "Liberation Serif", "Noto Sans CJK SC", serif;
  color: #000;
}
.dlg-bar {
  display: flex;
  align-items: center;
  justify-content: space-between;
  height: 25px;
}
.dlg-bar h1 {
  text-shadow: 0 0 6px #fff, 0 0 6px #fff;
}
.dlg-close {
  display: grid;
  align-self: flex-start;
  place-items: center;
  width: 42px;
  height: 17px;
  border: 1px solid #6a2a22;
  border-top: 0;
  border-radius: 0 0 4px 4px;
  background: linear-gradient(#e3a99c, #d0604c 48%, #b83018 52%, #d8694c);
}
.dlg-close svg {
  width: 11px;
  height: 9px;
}
.dlg-body {
  position: relative;
  padding: 5px 27px 8px 17px;
  border: 1px solid #77736a;
  background: #f0f0f0;
}
.summary {
  display: flex;
  align-items: center;
  justify-content: space-between;
}
dl {
  display: grid;
  grid-template-columns: 93px auto;
  line-height: 15px;
}
.sample {
  display: flex;
  align-items: center;
  gap: 18px;
}
.sample input {
  width: 65px;
  height: 20px;
  padding: 0 2px;
  border: 1px solid #a6c8e4;
  outline: 0;
  background: #fff;
}
.sample input::selection {
  color: #fff;
  background: #3399ff;
}
fieldset {
  min-width: 0;
  margin: 0;
  padding: 0 11px 4px 7px;
  border: 1px solid #d5dfe5;
  border-radius: 3px;
}
legend {
  height: 14px;
  margin-left: -3px;
  padding: 0 2px;
  line-height: 14px;
}
.layers {
  margin-top: 6px;
}
.side {
  height: 19px;
  line-height: 19px;
  text-align: center;
}
.side.outer {
  height: 17px;
  margin-top: -8px;
  line-height: 17px;
}
.grid {
  width: 100%;
  border: 1px solid #777;
  border-width: 1px 0 0 1px;
  border-spacing: 0;
  table-layout: fixed;
  background: #fff;
  font-family: "Open Sans", "Noto Sans CJK SC", sans-serif;
}
.c-n { width: 27px; }
.c-m { width: 151px; }
.c-w { width: 57px; }
.c-s { width: 88px; }
.grid th, .grid td {
  height: 18px;
  padding: 0 2px;
  border: 0 dotted #888;
  border-width: 0 1px 1px 0;
  text-align: left;
  font-weight: 400;
  line-height: 16px;
}
.grid thead th, .grid tbody th {
  border-style: solid;
  border-color: #222;
  background: #f0f0f0;
}
.grid thead th {
  height: 17px;
  text-align: center;
}
.grid .core td {
  font-weight: 700;
  background: #d0d0d0;
}
.grid .picked td {
  color: #fff;
  background: #000;
}
.grid .picked .wrap {
  background: #303030;
}
.grid .picked input {
  margin-left: 1px;
  border-color: #555;
  background: #181818;
}
.grid .picked input:checked::after {
  border-color: #e0bd74;
}
.grid .picked th {
  border-bottom-style: dotted;
}
.grid .rest th, .grid .rest td {
  height: 69px;
}
.inner {
  width: 347px;
}
.row-buttons {
  display: grid;
  grid-template-columns: repeat(4, 80px);
  gap: 9px;
}
.btn {
  height: 20px;
  border: 1px solid #8a8a8a;
  border-radius: 3px;
  background: linear-gradient(#f4f4f4, #ebebeb 50%, #dadada 50%, #d0d0d0);
  line-height: 17px;
}
.btn:disabled {
  border-color: #b4babd;
  color: #888;
  background: #f4f4f4;
}
.btn.default {
  border-color: #3c8ab8;
  background: linear-gradient(#eef6fb, #dcecf5 50%, #c4dfee 50%, #b4d6ea);
  box-shadow: inset 0 0 0 1px #4cc8f4;
}
.wraps, .vertical {
  width: 365px;
}
.wraps {
  margin-top: 6px;
  padding-bottom: 5px;
}
.wrap-grid {
  display: grid;
  grid-template-columns: 168px 166px;
  column-gap: 13px;
  line-height: 15px;
}
.wrap-grid .end {
  padding-left: 3px;
}
.vertical {
  margin-top: 4px;
  padding: 6px 10px 6px 7px;
}
.vert-grid {
  display: grid;
  grid-template-columns: 98px 113px 113px;
  gap: 6px 11px;
}
.footer {
  display: flex;
  justify-content: space-between;
  margin: 5px 1px 0;
}
.footer .btn {
  width: 80px;
}
.answers {
  display: flex;
  gap: 6px;
}
.grip {
  position: absolute;
  right: 1px;
  bottom: 1px;
  width: 10px;
  height: 10px;
}
</style>
